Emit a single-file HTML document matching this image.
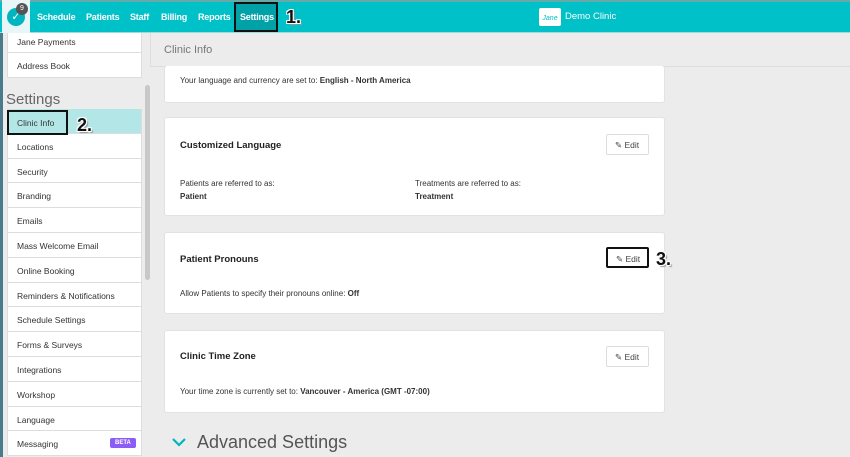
<!DOCTYPE html>
<html><head><style>
*{box-sizing:border-box;margin:0;padding:0}
body{width:850px;height:457px;overflow:hidden;background:#ececec;font-family:"Liberation Sans",sans-serif;position:relative;color:#333}
.top{position:absolute;left:0;top:0;width:850px;height:33px;background:#00c1c8;border-top:2px solid #6aa;border-bottom:1px solid #9dd}
.nav{position:absolute;top:10px;color:#fff;font-size:9px;font-weight:bold;letter-spacing:-0.2px}
.a{position:absolute;font-weight:bold;font-size:18px;color:#111;text-shadow:1px 1px 0 #fff,-1px -1px 0 #fff,1px -1px 0 #fff,-1px 1px 0 #fff,2px 2px 1px #999}
.side{position:absolute;left:7px;width:135px;background:#fff}
.it{height:24.8px;border-bottom:1px solid #ddd;border-left:1px solid #ddd;border-right:1px solid #ddd;font-size:8.5px;padding:8px 0 0 9px;color:#333;background:#fff}
.card{position:absolute;left:164px;width:501px;background:#fff;border:1px solid #e2e2e2;border-radius:3px}
.h{position:absolute;left:15px;font-size:9.5px;font-weight:bold;color:#222}
.t{position:absolute;font-size:8px;color:#333}
.btn{position:absolute;right:15px;width:43px;height:21px;border:1px solid #ddd;border-radius:2px;font-size:8.5px;color:#444;padding:5px 0 0 8px}
</style></head><body>
<div style="position:absolute;left:0;top:0;width:3px;height:457px;background:#4a7b8c"></div>
<div class="top">
<div style="position:absolute;left:2px;top:-2px;width:28px;height:33px;background:#e8f6f7"></div>
<div style="position:absolute;left:7px;top:6px;width:18px;height:18px;border-radius:50%;background:#00b5c0;color:#fff;font-size:11px;text-align:center;line-height:18px">✓</div>
<div style="position:absolute;left:16px;top:1px;width:12px;height:12px;border-radius:50%;background:#555;color:#fff;font-size:7px;text-align:center;line-height:12px">9</div>
<span class="nav" style="left:37px">Schedule</span>
<span class="nav" style="left:86px">Patients</span>
<span class="nav" style="left:130px">Staff</span>
<span class="nav" style="left:161px">Billing</span>
<span class="nav" style="left:198px">Reports</span>
<div style="position:absolute;left:234px;top:0;width:44px;height:30px;background:#00a2a8;border:2px solid #111"></div>
<span class="nav" style="left:240px">Settings</span>
<div style="position:absolute;left:539px;top:6px;width:22px;height:18px;background:#fff;border-radius:2px;color:#00c1c8;font-size:7px;font-style:italic;padding-top:7px;text-align:center">Jane</div>
<span style="position:absolute;left:565px;top:9px;color:#fff;font-size:9.5px">Demo Clinic</span>
</div>
<div class="a" style="left:286px;top:7px">1.</div>
<div style="position:absolute;left:3px;top:33px;width:143px;height:424px;background:#ececec"></div>
<div class="side" style="top:33px"><div class="it" style="height:20px;padding-top:4px">Jane Payments</div><div class="it">Address Book</div></div>
<div style="position:absolute;left:6px;top:91px;font-size:15px;color:#666">Settings</div>
<div class="side" style="top:109px">
<div class="it" style="background:#b3e6e6"></div>
<div class="it">Locations</div><div class="it">Security</div><div class="it">Branding</div><div class="it">Emails</div><div class="it">Mass Welcome Email</div><div class="it">Online Booking</div><div class="it">Reminders &amp; Notifications</div><div class="it">Schedule Settings</div><div class="it">Forms &amp; Surveys</div><div class="it">Integrations</div><div class="it">Workshop</div><div class="it">Language</div><div class="it">Messaging<span style="position:absolute;left:103px;margin-top:-1px;background:#8b5cf6;color:#fff;font-size:6px;font-weight:bold;padding:2px 5px;border-radius:2px">BETA</span></div>
</div>
<div style="position:absolute;left:7px;top:110px;width:61px;height:25px;border:2px solid #111;font-size:8.5px;padding:6px 0 0 8px">Clinic Info</div>
<div class="a" style="left:77px;top:115px">2.</div>
<div style="position:absolute;left:145px;top:85px;width:5px;height:195px;background:#c8c8c8;border-radius:3px"></div>
<div style="position:absolute;left:150px;top:33px;width:700px;height:34px;border-bottom:1px solid #ddd;border-left:1px solid #ddd"></div>
<div style="position:absolute;left:164px;top:44px;font-size:11px;color:#777">Clinic Info</div>
<div class="card" style="top:66px;height:37px;border-top:none"><div class="t" style="left:15px;top:10px">Your language and currency are set to: <b>English - North America</b></div></div>
<div class="card" style="top:117px;height:99px"><div class="h" style="top:22px">Customized Language</div><div class="btn" style="top:16px">✎ Edit</div>
<div class="t" style="left:15px;top:61px">Patients are referred to as:<br><b style="line-height:17px">Patient</b></div>
<div class="t" style="left:250px;top:61px">Treatments are referred to as:<br><b style="line-height:17px">Treatment</b></div></div>
<div class="card" style="top:232px;height:82px"><div class="h" style="top:21px">Patient Pronouns</div><div class="btn" style="top:14px;border:2px solid #111">✎ Edit</div>
<div class="t" style="left:15px;top:56px">Allow Patients to specify their pronouns online: <b>Off</b></div></div>
<div class="a" style="left:656px;top:249px">3.</div>
<div class="card" style="top:330px;height:83px"><div class="h" style="top:20px">Clinic Time Zone</div><div class="btn" style="top:15px">✎ Edit</div>
<div class="t" style="left:15px;top:56px">Your time zone is currently set to: <b>Vancouver - America (GMT -07:00)</b></div></div>
<svg style="position:absolute;left:171px;top:437px" width="16" height="10"><path d="M2 2 L8 8 L14 2" stroke="#00b5c0" stroke-width="2.2" fill="none"/></svg>
<div style="position:absolute;left:197px;top:432px;font-size:18px;color:#555">Advanced Settings</div>
</body></html>
